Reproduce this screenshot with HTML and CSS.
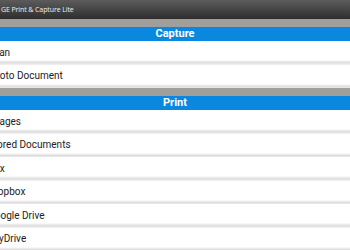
FILE: index.html
```html
<!DOCTYPE html>
<html>
<head>
<meta charset="utf-8">
<link rel="stylesheet" href="styles.css">
</head>
<body>
<div class="app">
  <div class="titlebar"><span class="title">GE Print &amp; Capture Lite</span></div>
  <div class="strip"></div>
  <div class="section-head">Capture</div>
  <ul class="list">
    <li class="row"><span class="label">Scan</span></li>
    <li class="row"><span class="label">Photo Document</span></li>
  </ul>
  <div class="strip"></div>
  <div class="section-head">Print</div>
  <ul class="list">
    <li class="row"><span class="label">Images</span></li>
    <li class="row"><span class="label">Stored Documents</span></li>
    <li class="row"><span class="label">Box</span></li>
    <li class="row"><span class="label">Dropbox</span></li>
    <li class="row"><span class="label">Google Drive</span></li>
    <li class="row"><span class="label">SkyDrive</span></li>
  </ul>
</div>
</body>
</html>
```
FILE: styles.css
```css
html, body {
  margin: 0;
  padding: 0;
  overflow: hidden;
  background: #ffffff;
}
.app {
  width: 350px;
  height: 250px;
  overflow: hidden;
  font-family: Roboto, "Liberation Sans", sans-serif;
}
.titlebar {
  height: 19px;
  background: linear-gradient(#5c5c5c, #2e2e2e);
  display: flex;
  align-items: center;
  padding-left: 1px;
}
.title {
  color: #f0f0f0;
  font-family: "Open Sans", "Liberation Sans", sans-serif;
  font-size: 7px;
  letter-spacing: -0.1px;
}
.strip {
  height: 8px;
  background: #a19f9c;
}
.section-head {
  height: 14px;
  background: #0a88e0;
  color: #ffffff;
  font-weight: bold;
  font-size: 11px;
  line-height: 14px;
  text-align: center;
}
.list {
  list-style: none;
  margin: 0;
  padding: 0;
}
.row {
  height: 23.5px;
  box-sizing: border-box;
  display: flex;
  align-items: center;
  background: linear-gradient(#ffffff 0, #ffffff 19px, #f2f2f2 20px, #dedede 21.5px, #eeeeee 23.5px);
  color: #222222;
  font-size: 10px;
}
.label {
  margin-left: -12px;
  padding-bottom: 1px;
}
```
